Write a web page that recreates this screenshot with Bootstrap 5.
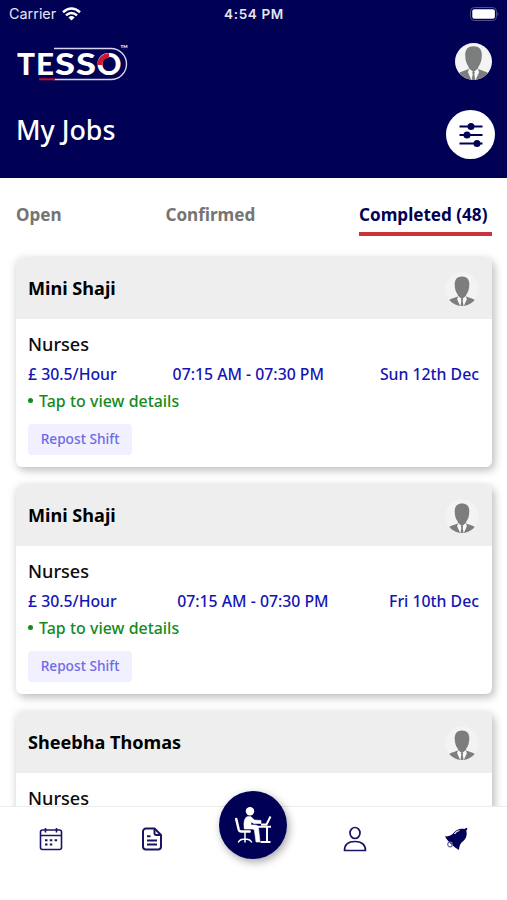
<!DOCTYPE html>
<html lang="en">
<head>
<meta charset="utf-8">
<meta name="viewport" content="width=device-width, initial-scale=1">
<title>My Jobs</title>
<link href="https://cdn.jsdelivr.net/npm/bootstrap@5.3.0/dist/css/bootstrap.min.css" rel="stylesheet">
<style>
body{font-family:"Noto Sans","Open Sans",sans-serif;height:900px;overflow:hidden;background:#fff;color:#0b0b0b}
.app-head{background:#000054;height:178px;padding:0 12px 0 16px}
.status{font-family:Inter,sans-serif;height:28px;font-size:14.4px;line-height:28px;margin:0 -4px 0 -7px;display:grid;grid-template-columns:1fr auto 1fr;color:#e6e6f2}
.status .clock{font-weight:600;font-size:13.5px;letter-spacing:.65px}
.brand-row{height:70px;padding:14px 3px 0 0}
.brand-row .me{margin-top:1px}
.title{font-size:26.8px;font-weight:500;line-height:36px;margin:14px 0 0}
.filter{width:49px;height:49px;margin-top:12px;border-radius:50%;background:#fff;padding:0;border:0}
.tabs{height:58px;padding:21px 15px 0 16px;font-size:17.1px;font-weight:700;line-height:31px;color:#747474}
.tabs .on{color:#000054;border-bottom:4px solid #ca3438;height:37px;width:133px;white-space:nowrap}
.jobs{height:570px;overflow:hidden;padding:22px 15px 0 16px}
.job{border:0;border-radius:6px;height:209px;margin-bottom:18px;box-shadow:3px 4px 8px rgba(0,0,0,.2),0 0 10px rgba(0,0,0,.1)}
.job-head{background:#eee;height:61px;border-radius:6px 6px 0 0;padding:0 12px;font-size:18.1px;font-weight:700;color:#000}
.job-body{padding:12px 13px 0 12px}
.role{font-size:18.1px;font-weight:500;line-height:26px}
.facts{font-size:15.8px;font-weight:500;line-height:24px;color:#1414b4;margin-top:5px}
.hint{font-size:15.9px;font-weight:500;line-height:24px;color:#138a1c;margin-top:3px;word-spacing:.2px}
.hint::before{content:"";display:inline-block;width:5px;height:5px;border-radius:50%;background:#138a1c;margin-right:6px;vertical-align:4px}
.repost{background:#f0f0fe;color:#6f6ae6;border:0;border-radius:4px;width:104px;height:31px;font-size:13.7px;font-weight:500;line-height:30px;padding:0 0 1px;margin-top:11px}
.bottom-bar{height:60px;background:#fff;border-top:1px solid #ececec;position:relative;display:grid;grid-template-columns:repeat(5,101.4px);align-items:center;justify-items:center}
.bottom-bar>svg{margin-top:5px}
.desk{width:68px;height:68px;border-radius:50%;background:#000054;margin-top:-24px;box-shadow:2px 3px 8px rgba(0,0,0,.35)}
svg{display:block}
</style>
</head>
<body>
<svg width="0" height="0" class="position-absolute">
  <defs>
    <clipPath id="round"><circle cx="20" cy="20" r="20"/></clipPath>
    <symbol id="person" viewBox="0 0 40 40">
      <g clip-path="url(#round)" fill="#7c7e7e">
        <path d="M15 22h10v6l8 3c4 1.500 5 3.500 5 9H2c0-5.500 1-7.500 5-9l8-3z"/>
        <path d="M15.300 27.500l4.700 4 4.700-4 1.300 4L22 40.500h-4L14 31.500z" fill="#f8f8f8"/>
        <path d="M18.600 31.300h2.800l-.5 2.500 1.200 7h-4.200l1.200-7z"/>
        <path d="M20 3.500C26 3.500 29 7 29 13c0 6-1.500 9.500-3.500 12.500-1.500 2.200-3.300 4-5.500 4s-4-1.800-5.500-4C12.500 22.500 11 19 11 13c0-6 3-9.500 9-9.500z"/>
      </g>
    </symbol>
  </defs>
</svg>
<header class="app-head text-white">
  <div class="status">
    <div class="d-flex align-items-center"><span>Carrier</span>
      <svg style="margin-left:6px" width="19" height="14" viewBox="0 0 19 14" fill="none" stroke="#fff" stroke-width="2.500"><path d="M1 5.200Q9.500-2.300 18 5.200M4 8.400q5.500-4.700 11 0"/><path d="M6.400 10.400q3.100-2.600 6.200 0L9.500 13.600z" fill="#fff" stroke="none"/></svg>
    </div>
    <span class="clock">4:54 PM</span>
    <div class="d-flex align-items-center justify-content-end">
      <svg width="31" height="14" viewBox="0 0 31 14"><rect x="2.500" y=".5" width="26" height="13" rx="3.800" fill="none" stroke="#50508c"/><rect x="4.300" y="2.300" width="22.600" height="9.400" rx="2" fill="#fff"/><path d="M29.500 5c1.300.8 1.300 3.200 0 4z" fill="#50508c"/></svg>
    </div>
  </div>
  <div class="brand-row d-flex justify-content-between">
    <svg width="114" height="42" viewBox="16 42 114 42" font-family="Lato, sans-serif" font-weight="900" fill="#fff">
      <path d="M54 48.500h57a15.500 15.500 0 0 1 0 31H54" fill="none" stroke="#d5d5ee" stroke-width="1.400"/>
      <path d="M39 79.300h16" stroke="#c5102c" stroke-width="2"/>
      <text y="74.800" font-size="30"><tspan x="17" textLength="18" lengthAdjust="spacingAndGlyphs">T</tspan><tspan x="36" textLength="18" lengthAdjust="spacingAndGlyphs">E</tspan><tspan x="55" textLength="20" lengthAdjust="spacingAndGlyphs">S</tspan><tspan x="76" textLength="20" lengthAdjust="spacingAndGlyphs">S</tspan><tspan x="96.500" textLength="25" lengthAdjust="spacingAndGlyphs">O</tspan></text>
      <path d="M99.600 65a9.300 9.300 0 0 1 9.500-9.300" fill="none" stroke="#d8132d" stroke-width="4.800"/>
      <text x="120.500" y="48.300" font-size="4.500" textLength="7">TM</text>
    </svg>
    <svg class="me" width="37" height="37" viewBox="0 0 40 40"><circle cx="20" cy="20" r="20" fill="#f4f4f4"/><use href="#person"/></svg>
  </div>
  <div class="d-flex justify-content-between">
    <h1 class="title">My Jobs</h1>
    <button class="filter d-flex align-items-center justify-content-center" aria-label="Filter">
      <svg width="26" height="26" viewBox="0 0 26 26" stroke="#000054" stroke-width="1.800" fill="#000054"><path d="M1.500 4.500h23M1.500 13h23M1.500 21.500h23"/><g stroke="none"><circle cx="13" cy="4.500" r="3.500"/><circle cx="9" cy="13" r="3.500"/><circle cx="19" cy="21.500" r="3.500"/></g></svg>
    </button>
  </div>
</header>
<nav class="tabs d-flex justify-content-between">
  <div>Open</div><div>Confirmed</div><div class="on">Completed (48)</div>
</nav>
<main class="jobs">
  <article class="card job">
    <div class="job-head d-flex align-items-center justify-content-between"><span>Mini Shaji</span><svg width="36" height="36" viewBox="0 0 40 40"><circle cx="20" cy="20" r="18.500" fill="#f3f3f3"/><use href="#person" x="2" y="2" width="36" height="38"/></svg></div>
    <div class="job-body"><div class="role">Nurses</div>
      <div class="facts d-flex justify-content-between"><span>£ 30.5/Hour</span><span>07:15 AM - 07:30 PM</span><span>Sun 12th Dec</span></div>
      <div class="hint">Tap to view details</div><button class="repost">Repost Shift</button></div>
  </article>
  <article class="card job">
    <div class="job-head d-flex align-items-center justify-content-between"><span>Mini Shaji</span><svg width="36" height="36" viewBox="0 0 40 40"><circle cx="20" cy="20" r="18.500" fill="#f3f3f3"/><use href="#person" x="2" y="2" width="36" height="38"/></svg></div>
    <div class="job-body"><div class="role">Nurses</div>
      <div class="facts d-flex justify-content-between"><span>£ 30.5/Hour</span><span>07:15 AM - 07:30 PM</span><span>Fri 10th Dec</span></div>
      <div class="hint">Tap to view details</div><button class="repost">Repost Shift</button></div>
  </article>
  <article class="card job">
    <div class="job-head d-flex align-items-center justify-content-between"><span>Sheebha Thomas</span><svg width="36" height="36" viewBox="0 0 40 40"><circle cx="20" cy="20" r="18.500" fill="#f3f3f3"/><use href="#person" x="2" y="2" width="36" height="38"/></svg></div>
    <div class="job-body"><div class="role">Nurses</div></div>
  </article>
</main>
<footer class="bottom-bar">
  <svg width="24" height="24" viewBox="0 0 24 24" fill="none" stroke="#1a1464" stroke-width="1.600"><rect x="1.500" y="3" width="21" height="19.500" rx="2"/><path d="M1.500 8.500h21M6.500 1v4.500M17.500 1v4.500"/><path d="M6 13.300h2.500M10.800 13.300h2.500M15.600 13.300h2.500M6 17.600h2.500M10.800 17.600h2.500" stroke-width="2"/></svg>
  <svg width="24" height="24" viewBox="0 0 24 24" fill="none" stroke="#1a1464" stroke-width="2" stroke-linejoin="round"><path d="M14.500 1.500H6a3 3 0 0 0-3 3v15a3 3 0 0 0 3 3h12a3 3 0 0 0 3-3V8z"/><path d="M14.500 1.500V6a2 2 0 0 0 2 2H21M7 9.300h3.500M7 13.500h10M7 17.500h10"/></svg>
  <div class="desk d-flex align-items-center justify-content-center">
    <svg width="38" height="38" viewBox="0 0 38 38" fill="#fff" stroke="#fff" stroke-linecap="round" stroke-linejoin="round"><circle cx="16" cy="5.200" r="4.200" stroke="none"/><path d="M12.500 11c-2.500 2-3 6-2.200 12h8c1.500 0 2 .8 2.200 2l1.500 11h4L24.500 22c-.3-2-1.500-3-3.500-3h-4v-3l3 1.500h7v-3l-6.500-.5-4-3.500z" stroke-width=".6"/><path d="M2.200 13l2.500 10.500c.4 1.500 1 2 2.500 2h8.500" fill="none" stroke-width="2.500"/><path d="M11 26v7M4.500 36c1-2 3-3 6.500-3s5.500 1 6.500 3M11 33v3" fill="none" stroke-width="1.500"/><path d="M22 20.800h15M33 21v14.500M26.500 36h10M27 18.500h5.500l4-8" fill="none" stroke-width="2" stroke-linecap="butt"/></svg>
  </div>
  <svg width="24" height="26" viewBox="0 0 24 26" fill="none" stroke="#1a1464" stroke-width="1.700" stroke-linejoin="round"><ellipse cx="12" cy="7" rx="5" ry="5.500"/><path d="M1.500 24.500c0-6 4-9 10.500-9s10.500 3 10.500 9z"/></svg>
  <svg width="24" height="24" viewBox="0 0 24 24" fill="#000054"><path d="M1 9.500c4-.3 7-1.300 9-4C12.500 2 17 1 20.500 2L22.500.8 23.500 2l-1.300 1.500c1.300 4 0 8.500-3.500 11-2.500 2-3.400 4.500-3.700 8.500-5-3-11-8-14-13.500z"/><circle cx="6" cy="17.500" r="2.300" fill="none" stroke="#6a68a0" stroke-width="1.200"/><path d="M10.500 7c1.300-2.300 3-3.200 5-3.500" stroke="#fff" stroke-width="1.200" fill="none"/></svg>
</footer>
<script src="https://cdn.jsdelivr.net/npm/bootstrap@5.3.0/dist/js/bootstrap.bundle.min.js"></script>
</body>
</html>
